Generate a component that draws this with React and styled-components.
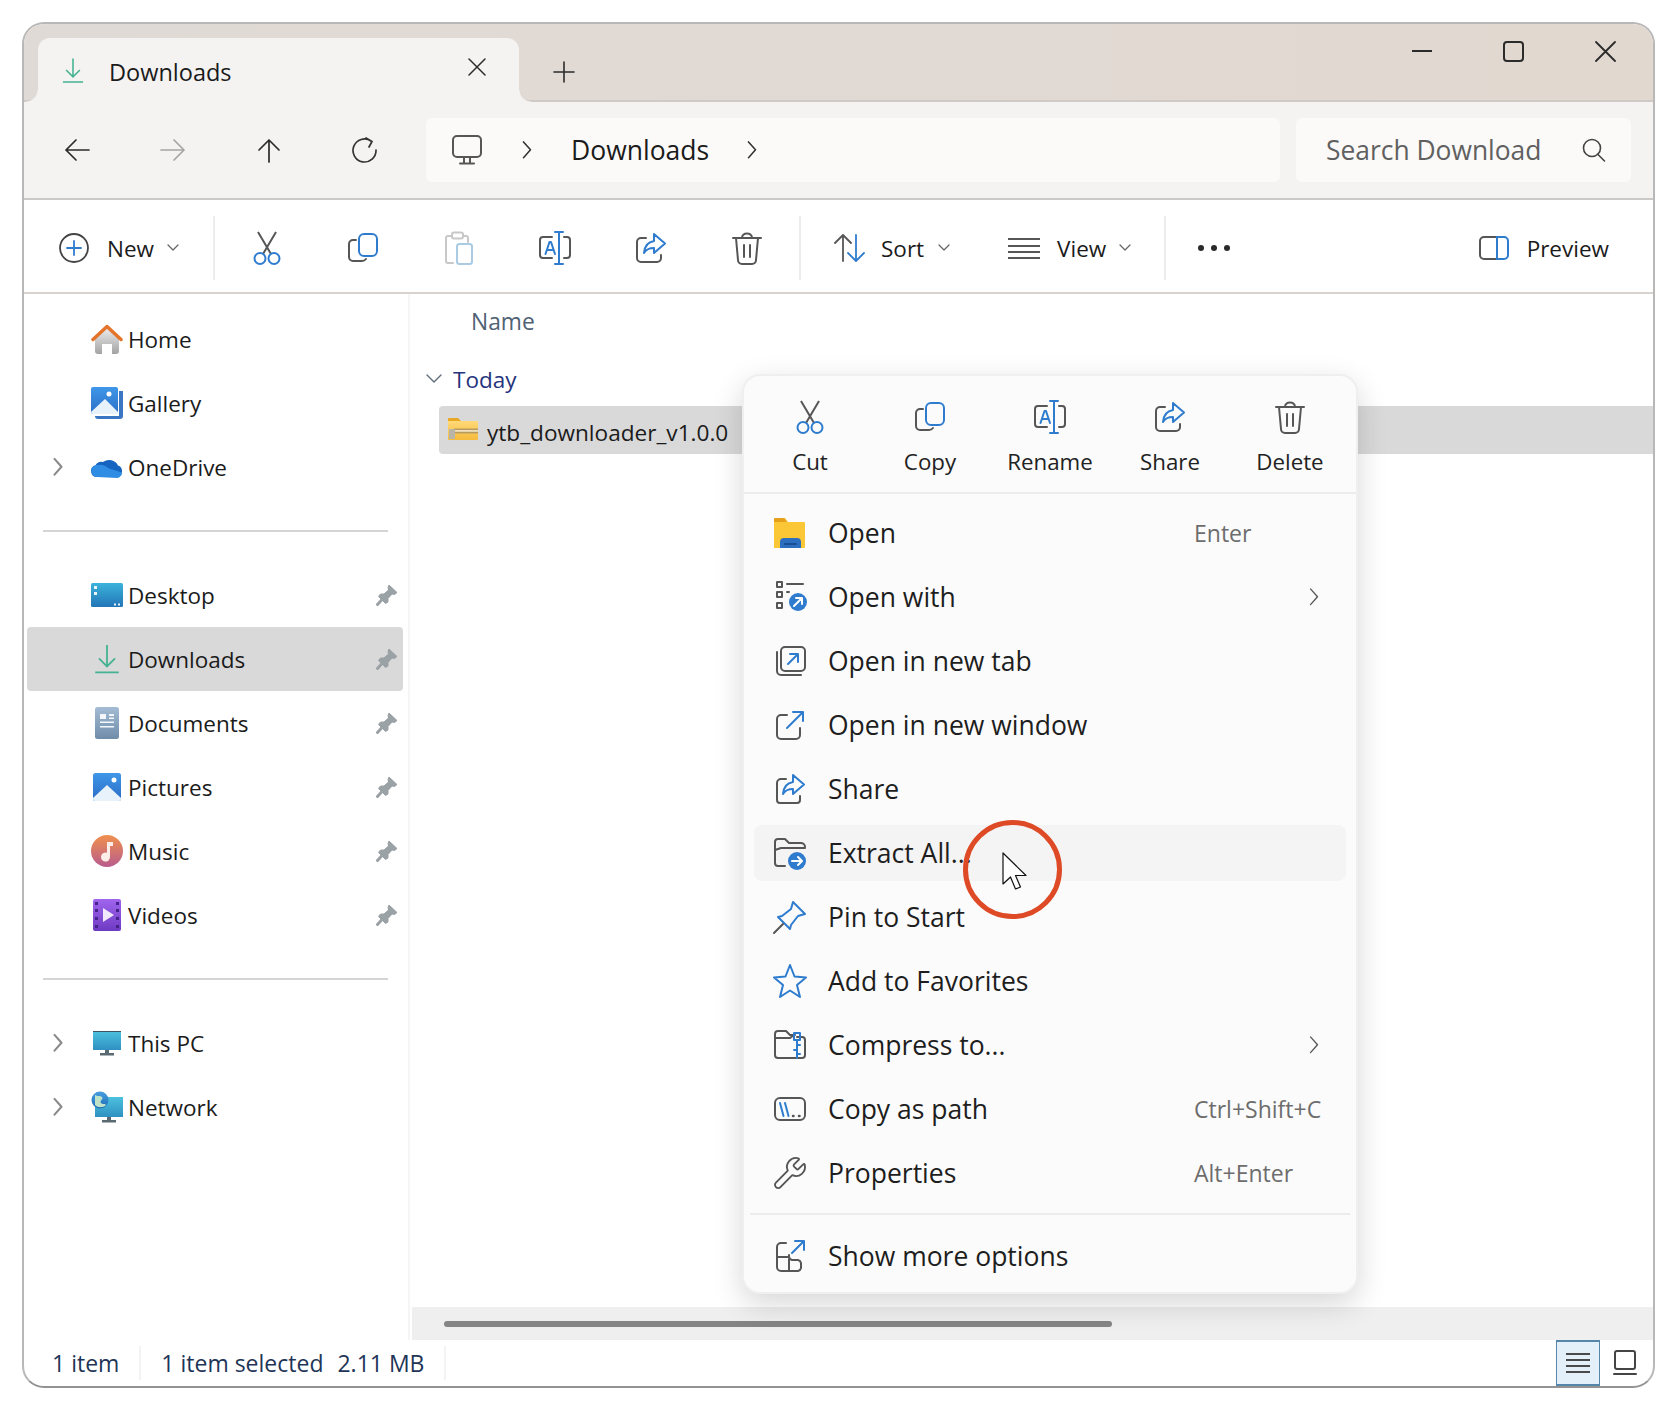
import React from "react";
import styled, { createGlobalStyle } from "styled-components";
import { Wrench } from "lucide-react";

const GREY = "#565656";
const BLUE = "#2f7ccf";
const FONT = `"Open Sans", "Noto Sans", sans-serif`;

const Global = createGlobalStyle`
  * { box-sizing: border-box; }
  html, body { margin: 0; background: #fff; }
  body { font-family: ${FONT}; color: #1b1b1b; }
`;

const Page = styled.div`
  width: 1676px;
  height: 1404px;
  padding: 22px 0 0 22px;
`;

const Win = styled.div`
  width: 1633px;
  height: 1366px;
  border: 2px solid #b8b8b8;
  border-bottom-color: #939393;
  border-radius: 22px;
  display: flex;
  flex-direction: column;
  overflow: hidden;
  background: #fff;
`;

/* title bar */
const TitleBar = styled.div`
  height: 78px;
  flex: none;
  display: flex;
  align-items: flex-end;
  background: linear-gradient(90deg, #e0dad6, #e1d8d0);
  box-shadow: inset 0 -2px 0 #cfcac6;
`;

const Tab = styled.div`
  position: relative;
  width: 481px;
  height: 64px;
  margin-left: 14px;
  padding-left: 24px;
  display: flex;
  align-items: center;
  background: #f5f3f1;
  border-radius: 12px 12px 0 0;
  &::before, &::after {
    content: "";
    position: absolute;
    bottom: 0;
    width: 12px;
    height: 12px;
  }
  &::before { left: -12px; background: radial-gradient(circle at 0 0, transparent 11px, #f5f3f1 12px); }
  &::after { right: -12px; background: radial-gradient(circle at 100% 0, transparent 11px, #f5f3f1 12px); }
`;

const TabLabel = styled.span`
  font-size: 23.5px;
  margin: 3px 0 0 25px;
  flex: 1;
`;

const TabClose = styled.span`
  display: flex;
  margin: 0 33px 6px 0;
`;

const NewTab = styled.span`
  display: flex;
  margin: 0 0 19px 34px;
`;

const WinButtons = styled.div`
  display: flex;
  align-items: center;
  margin: 0 37px 40px auto;
  height: 22px;
  gap: 71px;
`;

/* address row */
const AddressRow = styled.div`
  height: 98px;
  flex: none;
  display: flex;
  align-items: center;
  padding-left: 5px;
  background: #f5f3f1;
  border-bottom: 2px solid #cbc8c5;
`;

const NavBtn = styled.span`
  width: 96px;
  display: flex;
  justify-content: center;
`;

const Crumbs = styled.div`
  width: 854px;
  height: 64px;
  margin: 0 16px 0 13px;
  padding-left: 26px;
  display: flex;
  align-items: center;
  background: #fbfaf9;
  border-radius: 6px;
`;

const CrumbText = styled.span`
  font-size: 26.5px;
  margin: 0 36px 0 37px;
`;

const Search = styled.div`
  width: 335px;
  height: 64px;
  padding-left: 30px;
  display: flex;
  align-items: center;
  background: #fbfaf9;
  border-radius: 6px;
  font-size: 26.4px;
  color: #606060;
`;

const SearchIcon = styled.span`
  display: flex;
  margin-left: 41px;
`;

/* command bar */
const CommandBar = styled.div`
  height: 94px;
  flex: none;
  display: flex;
  align-items: center;
  padding-top: 4px;
  background: #fff;
  border-bottom: 2px solid #d8d3ce;
`;

const CmdItem = styled.div`
  display: flex;
  align-items: center;
  font-size: 22.5px;
  margin-left: ${(p) => p.$ml || 0}px;
  gap: ${(p) => p.$gap || 0}px;
`;

const PreviewBtn = styled(CmdItem)`
  margin-left: auto;
  margin-right: 44px;
`;

const CmdIcon = styled.span`
  width: 96px;
  display: flex;
  justify-content: center;
`;

const CmdSep = styled.span`
  width: 2px;
  height: 64px;
  background: #ececec;
  margin-left: ${(p) => p.$ml}px;
  margin-right: ${(p) => p.$mr || 0}px;
`;

const Caret = styled.span`
  display: flex;
  margin-left: ${(p) => p.$ml}px;
`;

const Dots = styled.span`
  display: flex;
  gap: 7px;
  margin-left: 32px;
  i { width: 6px; height: 6px; border-radius: 50%; background: #2a2a2a; }
`;

/* body */
const Body = styled.div`
  flex: 1;
  display: flex;
  min-height: 0;
`;

const Sidebar = styled.nav`
  width: 386px;
  flex: none;
  padding: 13px 0 0 3px;
  border-right: 2px solid #f5f5f5;
`;

const NavRow = styled.div`
  width: 376px;
  height: 64px;
  display: flex;
  align-items: center;
  padding: 0 5px 0 23px;
  border-radius: 4px;
  font-size: 22.5px;
  background: ${(p) => (p.$active ? "#d9d9d9" : "transparent")};
`;

const Expander = styled.span`
  width: 16px;
  display: flex;
  justify-content: center;
  flex: none;
`;

const NavIcon = styled.span`
  width: 32px;
  margin: 0 5px 0 25px;
  display: flex;
  justify-content: center;
  flex: none;
`;

const NavLabel = styled.span`
  flex: 1;
`;

const SideRule = styled.hr`
  width: 345px;
  height: 2px;
  margin: 31px 0 31px 16px;
  border: 0;
  background: #d5d5d5;
`;

const Content = styled.main`
  position: relative;
  flex: 1;
  display: flex;
  flex-direction: column;
`;

const ColHead = styled.div`
  height: 54px;
  flex: none;
  padding-left: 61px;
  display: flex;
  align-items: center;
  font-size: 22.8px;
  color: #4f6175;
`;

const Group = styled.div`
  height: 58px;
  flex: none;
  padding: 4px 0 0 16px;
  display: flex;
  align-items: center;
  font-size: 22.5px;
  color: #25347c;
  gap: 11px;
`;

const FileRow = styled.div`
  height: 48px;
  flex: none;
  margin-left: 29px;
  padding-left: 9px;
  display: flex;
  align-items: center;
  gap: 9px;
  font-size: 22.6px;
  background: #d9d9d9;
  border-radius: 4px 0 0 4px;
`;

const FileName = styled.span`
  margin-top: 5px;
`;

const Track = styled.div`
  height: 33px;
  margin: auto 0 0 2px;
  padding-left: 32px;
  display: flex;
  align-items: center;
  background: #efefef;
`;

const Thumb = styled.div`
  width: 668px;
  height: 6px;
  border-radius: 3px;
  background: #858585;
`;

const StatusBar = styled.footer`
  height: 46px;
  flex: none;
  display: flex;
  align-items: center;
  padding: 0 3px 0 28px;
  font-size: 23px;
  color: #1f3557;
`;

const StatusCell = styled.span`
  margin-left: ${(p) => p.$ml || 0}px;
`;

const StatusRule = styled.span`
  width: 2px;
  height: 34px;
  background: #f3f3f3;
  margin-left: ${(p) => p.$ml}px;
`;

const ViewToggle = styled.span`
  width: 44px;
  height: 46px;
  margin-left: auto;
  display: flex;
  align-items: center;
  justify-content: center;
  background: #e3f0fa;
  border: solid #5687ab;
  border-width: 2px 1px;
`;

const ViewPlain = styled.span`
  width: 50px;
  display: flex;
  justify-content: center;
`;

/* context menu */
const Menu = styled.div`
  position: absolute;
  left: 332px;
  top: 80px;
  width: 616px;
  height: 920px;
  z-index: 2;
  background: #fbfbfb;
  border: 2px solid #efefef;
  border-radius: 18px;
  box-shadow: 0 10px 30px rgba(0, 0, 0, 0.16);
`;

const Actions = styled.div`
  height: 118px;
  padding-left: 6px;
  display: grid;
  grid-template-columns: repeat(5, 120px);
  border-bottom: 2px solid #ececec;
`;

const Action = styled.div`
  display: flex;
  flex-direction: column;
  align-items: center;
  padding-top: 23px;
  font-size: 22.3px;
  gap: 11px;
  color: #222;
`;

const ActionIcon = styled.span`
  height: 36px;
  display: flex;
  align-items: center;
`;

const MenuList = styled.div`
  padding-top: 7px;
  display: flex;
  flex-direction: column;
`;

const MenuRow = styled.div`
  position: relative;
  height: 56px;
  flex: none;
  margin: 4px 10px;
  padding-left: 18px;
  display: flex;
  align-items: center;
  border-radius: 8px;
  font-size: 26.5px;
  background: ${(p) => (p.$hover ? "#f4f4f4" : "transparent")};
`;

const MenuIcon = styled.span`
  width: 36px;
  height: 36px;
  margin-right: 20px;
  display: flex;
  flex: none;
`;

const MenuLabel = styled.span`
  flex: 1;
  color: #1e1e1e;
`;

const Trail = styled.span`
  width: 152px;
  flex: none;
  font-size: 23px;
  color: #6d6d6d;
  display: flex;
  padding-left: ${(p) => (p.$chevron ? 113 : 0)}px;
`;

const MenuRule = styled.div`
  height: 2px;
  flex: none;
  margin: 8px 6px 9px;
  background: #ececec;
`;

const Ring = styled.span`
  position: absolute;
  left: 209px;
  top: -5px;
  width: 99px;
  height: 99px;
  border: 5px solid #dd4a25;
  border-radius: 50%;
`;

const Pointer = styled.svg`
  position: absolute;
  left: 248px;
  top: 27px;
`;

/* outline icons */
const Line = ({ w, h, d, c = "#2b2b2b", sw = 1.8, vb }) => (
  <svg width={w} height={h} viewBox={vb || `0 0 ${w} ${h}`} fill="none" stroke={c} strokeWidth={sw} strokeLinecap="round" strokeLinejoin="round">
    <path d={d} />
  </svg>
);

const DownloadArrow = ({ w, h }) => (
  <svg width={w} height={h} viewBox="0 0 24 28" fill="none" stroke="#45b392" strokeWidth="1.7">
    <path d="M12 1V21M4.5 13.5L12 21l7.500-7.500M1 26.500H23" />
  </svg>
);

const Chev = ({ s = 16, c = "#333", sw = 1.8 }) => <Line w={s} h={s * 1.4} vb="0 0 16 22" c={c} sw={sw} d="M4 2l8 9-8 9" />;
const Down = () => <Line w={12} h={8} c="#666" sw={1.3} d="M1 1l5 5 5-5" />;

const Scissors = () => (
  <svg width="30" height="34" viewBox="0 0 30 34" fill="none" strokeWidth="2">
    <path d="M6 1l13 22M24 1L11 23" stroke={GREY} />
    <circle cx="8" cy="27.500" r="5.500" stroke={BLUE} />
    <circle cx="22" cy="27.500" r="5.500" stroke={BLUE} />
  </svg>
);

const CopyIco = () => (
  <svg width="32" height="30" viewBox="0 0 32 30" fill="none" strokeWidth="2" strokeLinecap="round">
    <rect x="12" y="1" width="18" height="22" rx="5" stroke={BLUE} />
    <path d="M9 7H6a4 4 0 0 0-4 4v13a4 4 0 0 0 4 4h9a5 5 0 0 0 4-2" stroke={GREY} />
  </svg>
);

const PasteIco = () => (
  <svg width="30" height="34" viewBox="0 0 30 34" fill="none" strokeWidth="2" strokeLinecap="round">
    <path d="M19 5h3a2 2 0 0 1 2 2v4M8 5H4a2 2 0 0 0-2 2v23a2 2 0 0 0 2 2h5" stroke="#c8c8c8" />
    <rect x="8" y="1.500" width="11" height="6" rx="2" stroke="#c8c8c8" />
    <rect x="13" y="13" width="15" height="20" rx="2.500" stroke="#a9cbe3" />
  </svg>
);

const RenameIco = () => (
  <svg width="34" height="34" viewBox="0 0 34 34" fill="none" strokeWidth="2" strokeLinecap="round" strokeLinejoin="round">
    <path d="M14 6H5a3 3 0 0 0-3 3v15a3 3 0 0 0 3 3h9M26 6h3a3 3 0 0 1 3 3v15a3 3 0 0 1-3 3h-3" stroke={GREY} />
    <path d="M21 1v32M17 1h8M17 33h8M7.500 23l4-12h1.500l4 12M9 19h6.500" stroke={BLUE} />
  </svg>
);

const ShareIco = () => (
  <svg width="32" height="32" viewBox="0 0 32 32" fill="none" strokeWidth="2" strokeLinecap="round" strokeLinejoin="round">
    <path d="M11 6H6a4 4 0 0 0-4 4v16a4 4 0 0 0 4 4h16a4 4 0 0 0 4-4v-3" stroke={GREY} />
    <path d="M19 2l11 9.500L19 21v-5c-5 0-8 1.500-10 5 .5-7 4-11 10-12z" stroke={BLUE} />
  </svg>
);

const TrashIco = () => (
  <svg width="32" height="34" viewBox="0 0 32 34" fill="none" stroke={GREY} strokeWidth="2" strokeLinecap="round" strokeLinejoin="round">
    <path d="M2 7h28M11 7c0-6 10-6 10 0M5 7l2 22a4 4 0 0 0 4 4h10a4 4 0 0 0 4-4l2-22M13 14v12M19 14v12" />
  </svg>
);

const PlusCircle = () => (
  <svg width="30" height="30" viewBox="0 0 30 30" fill="none" strokeWidth="1.800" strokeLinecap="round">
    <circle cx="15" cy="15" r="14" stroke="#444" />
    <path d="M15 8v14M8 15h14" stroke={BLUE} />
  </svg>
);

const SortIco = () => (
  <svg width="34" height="30" viewBox="0 0 34 30" fill="none" strokeWidth="1.800" strokeLinecap="round" strokeLinejoin="round">
    <path d="M10 28V2M2 10l8-8 8 8" stroke={GREY} />
    <path d="M23 2v26M15 20l8 8 8-8" stroke={BLUE} />
  </svg>
);

const PreviewIco = () => (
  <svg width="32" height="24" viewBox="0 0 32 24" fill="none" strokeWidth="2">
    <path d="M20 1H6a4 4 0 0 0-4 4v14a4 4 0 0 0 4 4h14" stroke={GREY} />
    <path d="M19 1h7a4 4 0 0 1 4 4v14a4 4 0 0 1-4 4h-7z" stroke={BLUE} />
  </svg>
);

const PinFill = () => (
  <svg width="22" height="22" viewBox="0 0 22 22" fill="#9aa2a5" stroke="#9aa2a5" strokeLinejoin="round">
    <path d="M13 1l8 7.500-2.500 2-2.500-.5-4 4.500v3.500l-2.500 1.500-7-7 2-2.500H8l4.500-4-.5-2.500z" />
    <path d="M6 15.500L1.500 20.500" fill="none" strokeWidth="3" strokeLinecap="round" />
  </svg>
);

/* menu icons */
const M = ({ children }) => (
  <svg width="36" height="36" viewBox="0 0 36 36" fill="none" strokeWidth="2" strokeLinecap="round" strokeLinejoin="round">
    {children}
  </svg>
);

const MOpen = () => (
  <M>
    <path d="M2 4a1 1 0 0 1 1-1h10l3 4h16a1 1 0 0 1 1 1v24a1 1 0 0 1-1 1H2z" fill="#fbc736" stroke="none" />
    <path d="M2 4a1 1 0 0 1 1-1h9l3 4H2z" fill="#e5a11c" stroke="none" />
    <path d="M8 33v-6a4 4 0 0 1 4-4h13a4 4 0 0 1 4 4v6z" fill="#2c6fbe" stroke="none" />
    <path d="M13 29h11" stroke="#1a4f95" />
  </M>
);

const MOpenWith = () => (
  <M>
    <path d="M5 3h5v5H5zM5 13h5v5H5zM5 24h5v5H5zM15 5h16" stroke={GREY} />
    <path d="M15 13h2" stroke={GREY} />
    <circle cx="26" cy="23" r="9" fill={BLUE} stroke="none" />
    <path d="M22 27l8-8M24 19h6v6" stroke="#fff" />
  </M>
);

const MNewTab = () => (
  <M>
    <rect x="9" y="4" width="24" height="24" rx="4" stroke={GREY} />
    <path d="M5 9v19a4 4 0 0 0 4 4h20" stroke={GREY} />
    <path d="M16 21l10-10M18 11h8v8" stroke={BLUE} />
  </M>
);

const MNewWin = () => (
  <M>
    <path d="M15 8H9a4 4 0 0 0-4 4v16a4 4 0 0 0 4 4h15a4 4 0 0 0 4-4v-7" stroke={GREY} />
    <path d="M15 21L31 5M21 5h10v9" stroke={BLUE} />
  </M>
);

const MShare = () => (
  <M>
    <path d="M14 8H9a4 4 0 0 0-4 4v17a3 3 0 0 0 3 3h17a3 3 0 0 0 3-3v-4" stroke={GREY} />
    <path d="M21 4l11 9.500L21 23v-5c-5 0-8 1.500-10 5 .5-7 4-11 10-12z" stroke={BLUE} />
  </M>
);

const MExtract = () => (
  <M>
    <path d="M13 31H6a3 3 0 0 1-3-3V7a3 3 0 0 1 3-3h7l4 4h12a4 4 0 0 1 4 4M3 15l6-2h24" stroke={GREY} />
    <circle cx="25" cy="26" r="9" fill={BLUE} stroke="none" />
    <path d="M20 26h9M26 22l4 4-4 4" stroke="#fff" />
  </M>
);

const MPin = () => (
  <M>
    <path d="M21 3l12 12-7 2-7 9-1 4L6 18l4-1 9-7z" stroke={BLUE} />
    <path d="M11 25L2 34" stroke={GREY} />
  </M>
);

const MStar = () => (
  <M>
    <path d="M18 2l4.500 11.500L34 14.500l-9 7.500 3 12-10-6.500L8 34l3-12-9-7.500 11.500-1z" stroke={BLUE} />
  </M>
);

const MCompress = () => (
  <M>
    <path d="M25 10h5a3 3 0 0 1 3 3v15a3 3 0 0 1-3 3H6a3 3 0 0 1-3-3V7a3 3 0 0 1 3-3h8l4 4h5M3 11h15l4-3" stroke={GREY} />
    <path d="M25 6h-3v7h6V6zM25 14v17M25 18h3M25 23h-3M25 27h3" stroke={BLUE} />
  </M>
);

const MPath = () => (
  <M>
    <rect x="3" y="7" width="30" height="22" rx="5" stroke={GREY} />
    <path d="M8 12l3.500 13M13 12l3.500 13" stroke={BLUE} />
    <path d="M21 25h.5M27 25h.5" stroke={GREY} strokeWidth="2.500" />
  </M>
);

const MMore = () => (
  <M>
    <path d="M14 5H9a4 4 0 0 0-4 4v20a4 4 0 0 0 4 4h17a4 4 0 0 0 3-3v-5a4 4 0 0 0-3-3h-6a4 4 0 0 1-3-3v-2M5 19h12M17 33V21" stroke={GREY} />
    <path d="M20 15L32 3M23 3h9v9" stroke={BLUE} />
  </M>
);

/* coloured sidebar icons */
const Grad = ({ id, a, b }) => (
  <linearGradient id={id} x1="0" y1="0" x2="0" y2="1">
    <stop offset="0" stopColor={a} />
    <stop offset="1" stopColor={b} />
  </linearGradient>
);

const HomeIco = () => (
  <svg width="32" height="30" viewBox="0 0 32 30">
    <defs><Grad id="hb" a="#ececec" b="#a3a3a3" /></defs>
    <path d="M4 15L16 4l12 11v12a3 3 0 0 1-3 3h-4V20H11v10H7a3 3 0 0 1-3-3z" fill="url(#hb)" />
    <path d="M2 15.500L16 2.500l14 13" fill="none" stroke="#e3742a" strokeWidth="3.500" strokeLinecap="round" strokeLinejoin="round" />
  </svg>
);

const GalleryIco = () => (
  <svg width="32" height="32" viewBox="0 0 32 32">
    <defs><Grad id="gb" a="#3f97e8" b="#2b6fc7" /></defs>
    <path d="M4 29h24V4h4v25a3 3 0 0 1-3 3H7a3 3 0 0 1-3-3z" fill="#3a76c4" />
    <rect x="0" y="0" width="27" height="27" rx="2" fill="url(#gb)" />
    <path d="M0 25L14 12l13 13v2H2a2 2 0 0 1-2-2z" fill="#e8f2fb" />
    <circle cx="18" cy="7" r="2.500" fill="#fff" />
  </svg>
);

const CloudIco = () => (
  <svg width="32" height="22" viewBox="0 0 32 22">
    <path d="M6 21a6 6 0 0 1-1.500-11.800A6 6 0 0 1 12 6 10 10 0 0 1 27 9.500 6 6 0 0 1 26.500 21z" fill="#1565c0" />
    <path d="M6 21a6 6 0 0 1-2-11.500c6-2 10 0 14 3l13 4a6 6 0 0 1-4.500 5.500z" fill="#2f8de4" />
  </svg>
);

const DesktopIco = () => (
  <svg width="32" height="24" viewBox="0 0 32 24">
    <defs><Grad id="db" a="#3cb3dc" b="#2275b6" /></defs>
    <rect width="32" height="24" rx="1.500" fill="url(#db)" />
    <path d="M3 3h3v3H3zM3 9h3v3H3zM23 20.500h2v2h-2zM27 20.500h2v2h-2z" fill="#e8f6fb" />
  </svg>
);

const DocsIco = () => (
  <svg width="24" height="32" viewBox="0 0 24 32">
    <defs><Grad id="dc" a="#a4bcd4" b="#6f8ca9" /></defs>
    <rect width="24" height="32" rx="2.500" fill="url(#dc)" />
    <path d="M5 7h6v5H5zM14 7h5v2h-5zM14 10.500h5v1.500h-5zM5 14.500h14V16H5zM5 19h14v1.500H5z" fill="#f3f7fb" />
  </svg>
);

const PicsIco = () => (
  <svg width="28" height="28" viewBox="0 0 28 28">
    <defs><Grad id="pc" a="#3f97e8" b="#2a6dc6" /></defs>
    <rect width="28" height="28" rx="2.500" fill="url(#pc)" />
    <path d="M0 25L14 12l14 13v1a2 2 0 0 1-2 2H2a2 2 0 0 1-2-2z" fill="#e8f2fb" />
    <circle cx="21" cy="7" r="2.500" fill="#fff" />
  </svg>
);

const MusicIco = () => (
  <svg width="32" height="32" viewBox="0 0 32 32">
    <defs><Grad id="mu" a="#f0904d" b="#b85c8e" /></defs>
    <circle cx="16" cy="16" r="16" fill="url(#mu)" />
    <path d="M16 7h6v4h-3v11a4.500 4.500 0 1 1-3-4.200z" fill="#fbeee8" />
  </svg>
);

const VideoIco = () => (
  <svg width="28" height="32" viewBox="0 0 28 32">
    <defs><Grad id="vi" a="#a165ee" b="#6e3ac2" /></defs>
    <rect width="28" height="32" rx="2" fill="url(#vi)" />
    <path d="M2 3h3v3H2zM2 10h3v3H2zM2 18h3v3H2zM2 26h3v3H2zM23 3h3v3h-3zM23 10h3v3h-3zM23 18h3v3h-3zM23 26h3v3h-3z" fill="#45238a" />
    <path d="M10 9l11 7-11 7z" fill="#f1e8fb" />
  </svg>
);

const PcIco = () => (
  <svg width="28" height="25" viewBox="0 0 28 25">
    <defs><Grad id="pc1" a="#4cc1de" b="#2f90c2" /></defs>
    <rect width="28" height="19" fill="url(#pc1)" />
    <path d="M0 0h28v1H0z" fill="#3a5566" />
    <path d="M12 19h4v3h-4zM7 22h14v2.500H7z" fill="#5a6a72" />
  </svg>
);

const NetIco = () => (
  <svg width="32" height="32" viewBox="0 0 32 32">
    <defs>
      <Grad id="ne" a="#4cc1de" b="#2f90c2" />
      <Grad id="gl" a="#4a9fe0" b="#1e6bb5" />
    </defs>
    <rect x="4" y="6" width="28" height="20" fill="url(#ne)" />
    <path d="M16 26h4v3h-4zM11 29h14v2.500H11z" fill="#5a6a72" />
    <circle cx="9" cy="9" r="8.500" fill="url(#gl)" />
    <path d="M4 4c3 2 5 0 7 2s-3 4-1 6 4 0 5 2c-3 3-8 3-11 0z" fill="#bfe3c9" />
  </svg>
);

const ZipIco = () => (
  <svg width="30" height="30" viewBox="0 0 30 30">
    <defs><Grad id="zf" a="#ffd978" b="#f5bb3c" /></defs>
    <path d="M0 4a1 1 0 0 1 1-1h9l3 3H0z" fill="#e9a823" />
    <path d="M0 6h29a1 1 0 0 1 1 1v17a1 1 0 0 1-1 1H1a1 1 0 0 1-1-1z" fill="url(#zf)" />
    <path d="M6 13.500h24v5H6z" fill="#b89a5f" />
    <path d="M6 15h24v1.800H6z" fill="#eee0bc" />
    <path d="M1 14h6v10H1z" fill="#b9b4a6" />
  </svg>
);

const navTop = [
  { label: "Home", icon: <HomeIco /> },
  { label: "Gallery", icon: <GalleryIco /> },
  { label: "OneDrive", icon: <CloudIco />, expand: true },
];
const navPinned = [
  { label: "Desktop", icon: <DesktopIco /> },
  { label: "Downloads", icon: <DownloadArrow w={32} h={30} />, active: true },
  { label: "Documents", icon: <DocsIco /> },
  { label: "Pictures", icon: <PicsIco /> },
  { label: "Music", icon: <MusicIco /> },
  { label: "Videos", icon: <VideoIco /> },
];
const navBottom = [
  { label: "This PC", icon: <PcIco />, expand: true },
  { label: "Network", icon: <NetIco />, expand: true },
];

const menuItems = [
  { label: "Open", icon: <MOpen />, hint: "Enter" },
  { label: "Open with", icon: <MOpenWith />, more: true },
  { label: "Open in new tab", icon: <MNewTab /> },
  { label: "Open in new window", icon: <MNewWin /> },
  { label: "Share", icon: <MShare /> },
  { label: "Extract All...", icon: <MExtract />, hover: true },
  { label: "Pin to Start", icon: <MPin /> },
  { label: "Add to Favorites", icon: <MStar /> },
  { label: "Compress to...", icon: <MCompress />, more: true },
  { label: "Copy as path", icon: <MPath />, hint: "Ctrl+Shift+C" },
  { label: "Properties", icon: <Wrench size={36} strokeWidth={1.25} color={GREY} />, hint: "Alt+Enter" },
];

const actions = [
  { label: "Cut", icon: <Scissors /> },
  { label: "Copy", icon: <CopyIco /> },
  { label: "Rename", icon: <RenameIco /> },
  { label: "Share", icon: <ShareIco /> },
  { label: "Delete", icon: <TrashIco /> },
];

function SideItem({ item, pinned }) {
  return (
    <NavRow $active={item.active}>
      <Expander>{item.expand && <Chev s={14} c="#8a8a8a" sw={2.4} />}</Expander>
      <NavIcon>{item.icon}</NavIcon>
      <NavLabel>{item.label}</NavLabel>
      {pinned && <PinFill />}
    </NavRow>
  );
}

export default function App() {
  return (
    <Page>
      <Global />
      <Win>
        <TitleBar>
          <Tab>
            <DownloadArrow w={22} h={27} />
            <TabLabel>Downloads</TabLabel>
            <TabClose>
              <Line w={18} h={18} sw={1.5} d="M1 1l16 16M17 1L1 17" />
            </TabClose>
          </Tab>
          <NewTab>
            <Line w={22} h={22} sw={1.6} d="M11 1v20M1 11h20" />
          </NewTab>
          <WinButtons>
            <Line w={20} h={4} sw={2} d="M0 2h20" />
            <Line w={21} h={21} sw={2} d="M4 1h13a3 3 0 0 1 3 3v13a3 3 0 0 1-3 3H4a3 3 0 0 1-3-3V4a3 3 0 0 1 3-3z" />
            <Line w={21} h={21} sw={1.8} d="M1 1l19 19M20 1L1 20" />
          </WinButtons>
        </TitleBar>

        <AddressRow>
          <NavBtn><Line w={26} h={24} sw={1.7} d="M25 12H2M12 2L2 12l10 10" /></NavBtn>
          <NavBtn><Line w={26} h={24} sw={1.7} c="#a5a5a5" d="M1 12h23M14 2l10 10-10 10" /></NavBtn>
          <NavBtn><Line w={24} h={25} sw={1.7} d="M12 24V2M2 12L12 2l10 10" /></NavBtn>
          <NavBtn><Line w={26} h={26} sw={1.7} c="#333" d="M19 4a11.500 11.500 0 1 0 5 9M14 1l6 3.500L17 10" /></NavBtn>
          <Crumbs>
            <Line w={30} h={30} c={GREY} sw={2} d="M5 1h20a4 4 0 0 1 4 4v13a4 4 0 0 1-4 4H5a4 4 0 0 1-4-4V5a4 4 0 0 1 4-4zM12 22v6M18 22v6M8 28.500h14" />
            <Caret $ml={38}><Chev s={14} /></Caret>
            <CrumbText>Downloads</CrumbText>
            <Chev s={14} />
          </Crumbs>
          <Search>
            Search Download
            <SearchIcon><Line w={24} h={24} c="#444" sw={1.6} d="M10 1.500a8.500 8.500 0 1 0 0 17 8.500 8.500 0 0 0 0-17zM15.500 16l7 7" /></SearchIcon>
          </Search>
        </AddressRow>

        <CommandBar>
          <CmdItem $ml={35} $gap={18}>
            <PlusCircle />
            New
            <Caret $ml={-5}><Down /></Caret>
          </CmdItem>
          <CmdSep $ml={34} $mr={4} />
          <CmdIcon><Scissors /></CmdIcon>
          <CmdIcon><CopyIco /></CmdIcon>
          <CmdIcon><PasteIco /></CmdIcon>
          <CmdIcon><RenameIco /></CmdIcon>
          <CmdIcon><ShareIco /></CmdIcon>
          <CmdIcon><TrashIco /></CmdIcon>
          <CmdSep $ml={4} />
          <CmdItem $ml={32} $gap={14}>
            <SortIco />
            Sort
            <Caret $ml={0}><Down /></Caret>
          </CmdItem>
          <CmdItem $ml={58} $gap={17}>
            <Line w={32} h={24} c={GREY} sw={2} d="M0 3h32M0 10h32M0 16h32M0 22h32" />
            View
            <Caret $ml={-4}><Down /></Caret>
          </CmdItem>
          <CmdSep $ml={33} />
          <Dots><i /><i /><i /></Dots>
          <PreviewBtn $gap={17}>
            <PreviewIco />
            Preview
          </PreviewBtn>
        </CommandBar>

        <Body>
          <Sidebar>
            {navTop.map((n) => <SideItem key={n.label} item={n} />)}
            <SideRule />
            {navPinned.map((n) => <SideItem key={n.label} item={n} pinned />)}
            <SideRule />
            {navBottom.map((n) => <SideItem key={n.label} item={n} />)}
          </Sidebar>

          <Content>
            <ColHead>Name</ColHead>
            <Group>
              <Line w={16} h={10} c="#5d6b7a" sw={1.4} d="M1 1l7 7 7-7" />
              Today
            </Group>
            <FileRow>
              <ZipIco />
              <FileName>ytb_downloader_v1.0.0</FileName>
            </FileRow>
            <Track><Thumb /></Track>

            <Menu>
              <Actions>
                {actions.map((a) => (
                  <Action key={a.label}>
                    <ActionIcon>{a.icon}</ActionIcon>
                    {a.label}
                  </Action>
                ))}
              </Actions>
              <MenuList>
                {menuItems.map((m) => (
                  <MenuRow key={m.label} $hover={m.hover}>
                    <MenuIcon>{m.icon}</MenuIcon>
                    <MenuLabel>{m.label}</MenuLabel>
                    {(m.hint || m.more) && (
                      <Trail $chevron={m.more}>{m.more ? <Chev s={14} c="#555" sw={1.5} /> : m.hint}</Trail>
                    )}
                    {m.hover && (
                      <>
                        <Ring />
                        <Pointer width="26" height="40" viewBox="0 0 26 40">
                          <path d="M1 1v31l7.500-7 5 12 5-2-5-11.500H24z" fill="#fff" stroke="#111" strokeWidth="1.200" strokeLinejoin="round" />
                        </Pointer>
                      </>
                    )}
                  </MenuRow>
                ))}
                <MenuRule />
                <MenuRow>
                  <MenuIcon><MMore /></MenuIcon>
                  <MenuLabel>Show more options</MenuLabel>
                </MenuRow>
              </MenuList>
            </Menu>
          </Content>
        </Body>

        <StatusBar>
          <StatusCell>1 item</StatusCell>
          <StatusRule $ml={20} />
          <StatusCell $ml={20}>1 item selected</StatusCell>
          <StatusCell $ml={14}>2.11 MB</StatusCell>
          <StatusRule $ml={20} />
          <ViewToggle>
            <Line w={24} h={24} c="#4a4a4a" sw={2.2} d="M0 3h24M0 9h24M0 15h24M0 21h24" vb="0 0 24 24" />
          </ViewToggle>
          <ViewPlain>
            <Line w={26} h={26} c="#444" sw={2} d="M5 1h16a2 2 0 0 1 2 2v14a2 2 0 0 1-2 2H5a2 2 0 0 1-2-2V3a2 2 0 0 1 2-2zM2 24h22" />
          </ViewPlain>
        </StatusBar>
      </Win>
    </Page>
  );
}
